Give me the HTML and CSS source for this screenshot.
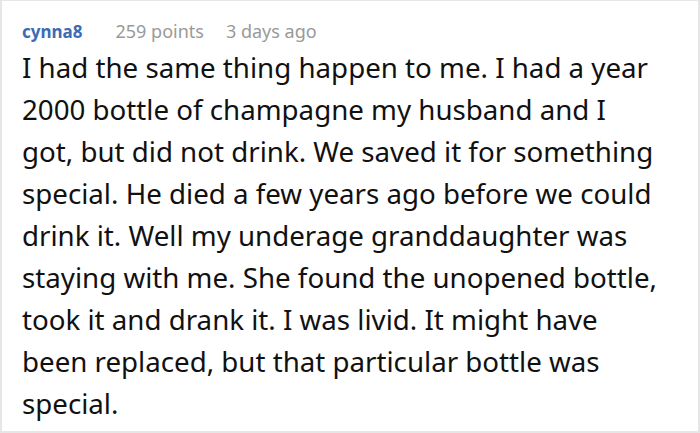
FILE: index.html
```html
<!DOCTYPE html>
<html>
<head>
<meta charset="utf-8">
<link rel="stylesheet" href="styles.css">
</head>
<body>
<div class="comment">
  <div class="meta">
    <span class="user">cynna8</span>
    <span class="points">259 points</span>
    <span class="time">3 days ago</span>
  </div>
  <p class="text">I had the same thing happen to me. I had a year 2000 bottle of champagne my husband and I got, but did not drink. We saved it for something special. He died a few years ago before we could drink it. Well my underage granddaughter was staying with me. She found the unopened bottle, took it and drank it. I was livid. It might have been replaced, but that particular bottle was special.</p>
</div>
</body>
</html>
```

FILE: styles.css
```css
html, body {
  margin: 0;
  padding: 0;
  background: #fff;
}
.comment {
  box-sizing: border-box;
  width: 700px;
  height: 433px;
  border: 2px solid #e6e6e6;
  border-top-width: 1px;
  padding: 18px 37px 0 20px;
  font-family: "Noto Sans", sans-serif;
}
.meta {
  display: flex;
  align-items: baseline;
  font-size: 18px;
  line-height: 24px;
}
.user {
  color: #3c6bb5;
  font-weight: 700;
  font-size: 17px;
}
.points, .time {
  color: #999;
}
.points { margin-left: 33px; }
.time { margin-left: 22px; }
.text {
  margin: 2px 0 0 0;
  font-size: 27.7px;
  line-height: 42px;
  color: #111;
}
```
